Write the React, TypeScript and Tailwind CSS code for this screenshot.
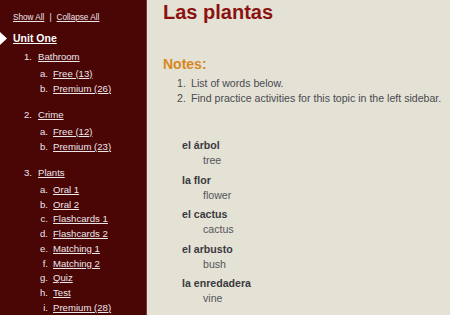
import React from "react";

const units = [
  {
    n: "1.",
    title: "Bathroom",
    items: ["Free (13)", "Premium (26)"],
  },
  {
    n: "2.",
    title: "Crime",
    items: ["Free (12)", "Premium (23)"],
  },
  {
    n: "3.",
    title: "Plants",
    items: [
      "Oral 1",
      "Oral 2",
      "Flashcards 1",
      "Flashcards 2",
      "Matching 1",
      "Matching 2",
      "Quiz",
      "Test",
      "Premium (28)",
    ],
  },
];

const letters = ["a.", "b.", "c.", "d.", "e.", "f.", "g.", "h.", "i."];

const words = [
  ["el árbol", "tree"],
  ["la flor", "flower"],
  ["el cactus", "cactus"],
  ["el arbusto", "bush"],
  ["la enredadera", "vine"],
];

export default function App() {
  return (
    <div
      className="flex h-[315px] w-[450px] overflow-hidden bg-[#e4e1d5]"
      style={{ fontFamily: '"Liberation Sans", Arial, sans-serif' }}
    >
      <aside className="relative w-[147px] shrink-0 border-r border-[#7a3636] bg-[#4a0505] pt-[12px] text-[#ece6ea]">
        <div className="pl-[13px] text-[8.2px] leading-[12px]">
          <a className="underline">Show All</a>
          <span className="mx-[5px]">|</span>
          <a className="underline">Collapse All</a>
        </div>
        <div className="relative mt-[6.6px] pl-[13px] text-[10.5px] font-bold leading-[15px] text-white">
          <svg
            className="absolute left-0 top-[1px]"
            width="7"
            height="13"
            viewBox="0 0 7 13"
          >
            <polygon points="0,0 7,6.5 0,13" fill="#ffffff" />
          </svg>
          <a className="underline">Unit One</a>
        </div>
        <div className="mt-[4.7px] text-[9.6px] leading-[14.7px]">
          {units.map((u) => (
            <div key={u.title} className="mb-[11.9px]">
              <div className="mb-[2px] flex">
                <span className="w-[32px] text-right">{u.n}</span>
                <a className="ml-[6px] underline">{u.title}</a>
              </div>
              {u.items.map((it, i) => (
                <div key={it} className="flex">
                  <span className="w-[48px] text-right">{letters[i]}</span>
                  <a className="ml-[5px] underline">{it}</a>
                </div>
              ))}
            </div>
          ))}
        </div>
      </aside>
      <main className="flex-1 pl-[16px]">
        <h1 className="text-[20px] font-bold leading-[24px] text-[#8c1212]">
          Las plantas
        </h1>
        <h2 className="mt-[32px] text-[14px] font-bold leading-[17px] text-[#d7881c]">
          Notes:
        </h2>
        <ol className="mt-[3px] text-[10.6px] leading-[15px] text-[#4a4a50]">
          <li className="flex">
            <span className="w-[28px] pl-[14px]">1.</span>
            <span>List of words below.</span>
          </li>
          <li className="flex">
            <span className="w-[28px] pl-[14px]">2.</span>
            <span>Find practice activities for this topic in the left sidebar.</span>
          </li>
        </ol>
        <dl className="mt-[32px] text-[10.6px] leading-[15px]">
          {words.map(([es, en]) => (
            <div key={es} className="mb-[4.5px]">
              <dt className="pl-[19px] font-bold text-[#3a3a3e]">{es}</dt>
              <dd className="pl-[40px] text-[#55555a]">{en}</dd>
            </div>
          ))}
        </dl>
      </main>
    </div>
  );
}
